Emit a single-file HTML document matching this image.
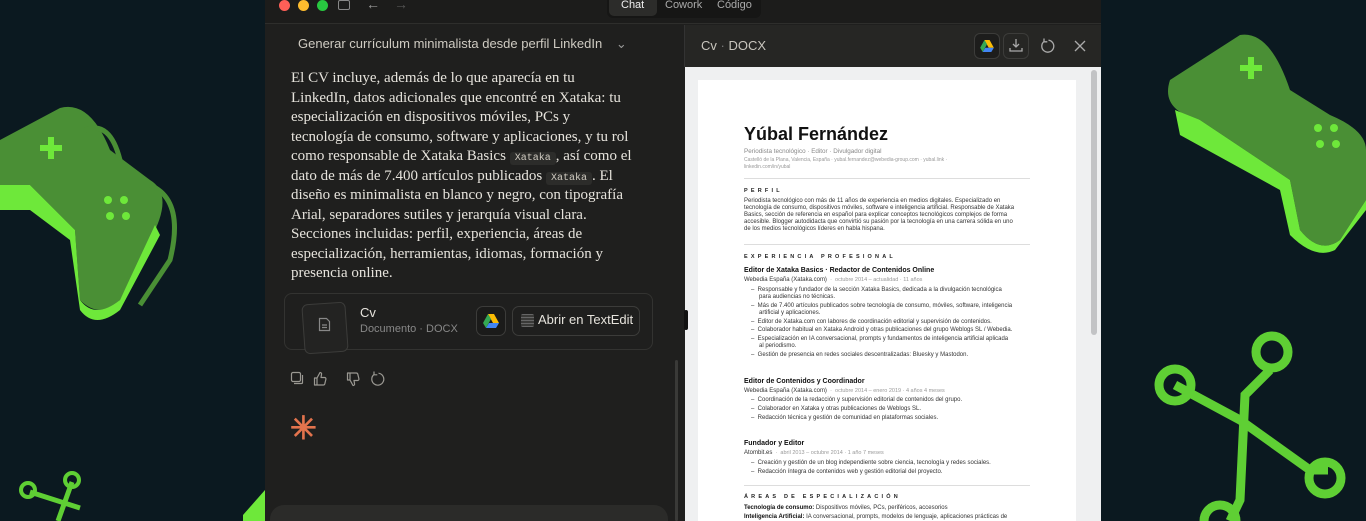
<!DOCTYPE html>
<html><head><meta charset="utf-8"><style>
*{margin:0;padding:0;box-sizing:border-box}
body{width:1366px;height:521px;overflow:hidden;background:#0b1920;font-family:"Liberation Sans",sans-serif;position:relative}
.a{position:absolute}
.win{left:265px;top:0;width:836px;height:521px;background:#1f1f1e;overflow:hidden}
.tb{left:0;top:0;width:836px;height:24px;background:#1c1c1b;border-bottom:1px solid #2e2e2c}
.chat p{position:absolute;left:26px;font-family:"Liberation Serif",serif;font-size:15px;color:#e6e3dc;white-space:nowrap}
.code{font-family:"Liberation Mono",monospace;font-size:10px;background:#2c2c2a;color:#cfcac0;padding:1px 5px;border-radius:3px}
.doc div{position:absolute;white-space:nowrap;font-family:"Liberation Sans",sans-serif}
.h{font-size:7.5px;font-weight:bold;color:#222;letter-spacing:3.2px}
.t{font-size:6px;color:#333}
.j{font-size:7px;font-weight:bold;color:#111}
.g{font-size:5.5px;color:#999}
.hr{height:1px;background:#ddd;width:286px}
</style></head><body>
<svg class="a" style="left:0;top:0" width="1366" height="521">
<g fill="#4a8f35">
<path d="M0 140 L60 108 Q90 100 110 150 L150 180 Q175 195 150 240 L120 300 Q100 320 80 300 L75 230 L30 185 L0 200Z"/>
<path d="M1170 80 L1240 35 Q1270 30 1290 90 L1330 115 Q1366 130 1366 150 L1366 200 L1340 240 Q1320 255 1300 230 L1290 180 L1200 120 Q1160 110 1170 80Z"/>
</g>
<g fill="#6ee83a">
<path d="M0 185 L30 185 L75 230 L80 300 Q95 320 120 300 L155 225 L160 235 L120 310 Q95 330 80 310 L70 240 L30 210 L0 210Z"/>
<path d="M1175 110 L1200 120 L1290 180 L1300 230 Q1320 255 1340 240 L1366 200 L1366 210 L1335 250 Q1315 260 1290 235 L1280 190 L1180 135Z"/>
<path d="M40 145 h8 v-8 h6 v8 h8 v6 h-8 v8 h-6 v-8 h-8z"/>
<path d="M1240 65 h8 v-8 h6 v8 h8 v6 h-8 v8 h-6 v-8 h-8z"/>
<circle cx="108" cy="200" r="4"/><circle cx="124" cy="200" r="4"/><circle cx="110" cy="216" r="4"/><circle cx="126" cy="216" r="4"/>
<circle cx="1318" cy="128" r="4"/><circle cx="1334" cy="128" r="4"/><circle cx="1320" cy="144" r="4"/><circle cx="1336" cy="144" r="4"/>
</g>
<g fill="none" stroke="#4a8f35" stroke-width="5"><path d="M150 185 Q185 200 170 260 L140 305"/><path d="M85 130 Q110 120 120 160"/></g>
<g fill="none" stroke="#5fcf34" stroke-width="9"><path d="M1175 385 L1240 420 L1310 470 L1328 470"/><path d="M1270 370 L1245 395 L1240 500 L1230 521"/>
<circle cx="1175" cy="385" r="16"/><circle cx="1272" cy="352" r="16"/><circle cx="1325" cy="478" r="16"/><circle cx="1220" cy="521" r="16"/>
<path d="M30 492 L80 508 M72 482 L58 521" stroke-width="5"/><circle cx="28" cy="490" r="7" stroke-width="4"/><circle cx="72" cy="480" r="7" stroke-width="4"/></g>
<path d="M243 515 L265 490 L265 521 L243 521Z" fill="#6ee83a"/>
</svg>
<div class="a win">
 <div class="a tb"></div>
 <div class="a" style="left:14px;top:0;width:11px;height:11px;border-radius:50%;background:#fe5f57"></div>
 <div class="a" style="left:33px;top:0;width:11px;height:11px;border-radius:50%;background:#febc2e"></div>
 <div class="a" style="left:52px;top:0;width:11px;height:11px;border-radius:50%;background:#28c840"></div>
 <div class="a" style="left:73px;top:0;width:12px;height:10px;border:1.3px solid #888;border-radius:2px"></div>
 <div class="a" style="left:101px;top:-4px;color:#999;font-size:14px">←</div>
 <div class="a" style="left:129px;top:-4px;color:#555;font-size:14px">→</div>
 <div class="a" style="left:342px;top:-6px;width:154px;height:24px;background:#161615;border-radius:6px"></div>
 <div class="a" style="left:344px;top:-6px;width:48px;height:22px;background:#2c2c2a;border-radius:5px"></div>
 <div class="a" style="left:356px;top:-1px;color:#f0f0f0;font-size:11px">Chat</div>
 <div class="a" style="left:400px;top:-1px;color:#aaa;font-size:11px">Cowork</div>
 <div class="a" style="left:452px;top:-1px;color:#aaa;font-size:11px">Código</div>
 <div class="chat">
  <div class="a" style="left:33px;top:36px;color:#cfcbc2;font-size:13px">Generar currículum minimalista desde perfil LinkedIn <span style="margin-left:10px;color:#999">⌄</span></div>
  <p style="top:70px">El CV incluye, además de lo que aparecía en tu</p>
  <p style="top:89.5px">LinkedIn, datos adicionales que encontré en Xataka: tu</p>
  <p style="top:109px">especialización en dispositivos móviles, PCs y</p>
  <p style="top:128.5px">tecnología de consumo, software y aplicaciones, y tu rol</p>
  <p style="top:148px">como responsable de Xataka Basics <span class="code">Xataka</span>, así como el</p>
  <p style="top:167.5px">dato de más de 7.400 artículos publicados <span class="code">Xataka</span>. El</p>
  <p style="top:187px">diseño es minimalista en blanco y negro, con tipografía</p>
  <p style="top:206.5px">Arial, separadores sutiles y jerarquía visual clara.</p>
  <p style="top:226px">Secciones incluidas: perfil, experiencia, áreas de</p>
  <p style="top:245.5px">especialización, herramientas, idiomas, formación y</p>
  <p style="top:265px">presencia online.</p>
 </div>
 <div class="a" style="left:19px;top:293px;width:369px;height:57px;border:1px solid #333331;border-radius:8px"></div>
 <div class="a" style="left:38px;top:303px;width:44px;height:50px;border:1px solid #3c3c3a;border-radius:6px;background:#232322;transform:rotate(-4deg)"></div>
 <svg class="a" style="left:53px;top:317px" width="13" height="15" fill="none" stroke="#888" stroke-width="1.2"><path d="M1.5 1.5h7l3 3v9h-10z M4 8h5 M4 10.5h5"/></svg>
 <div class="a" style="left:95px;top:305px;color:#e6e3dc;font-size:13px">Cv</div>
 <div class="a" style="left:95px;top:323px;color:#888;font-size:11px">Documento · DOCX</div>
 <div class="a" style="left:211px;top:306px;width:30px;height:30px;border:1px solid #3c3c3a;border-radius:7px;background:#1b1b1a"></div>
 <svg class="a" style="left:218px;top:314px" width="16" height="14" viewBox="0 0 16 14"><path d="M5 0h6l5 9h-6z" fill="#fbbc04"/><path d="M5 0L0 9l3 5 5-9z" fill="#34a853"/><path d="M3 14h10l3-5H6z" fill="#4285f4"/></svg>
 <div class="a" style="left:247px;top:306px;width:128px;height:30px;border:1px solid #3c3c3a;border-radius:7px"></div>
 <div class="a" style="left:256px;top:314px;width:13px;height:13px;background:repeating-linear-gradient(#666 0 1px,#3a3a38 1px 3px);border-radius:2px"></div>
 <div class="a" style="left:273px;top:312px;color:#e6e3dc;font-size:13px">Abrir en TextEdit</div>
 <svg class="a" style="left:25px;top:371px" width="120" height="16" fill="none" stroke="#9a9892" stroke-width="1.2" stroke-linejoin="round">
  <rect x="1.5" y="1.5" width="9" height="9" rx="1.5"/><path d="M4 12.5h7.5a1 1 0 0 0 1-1V4"/>
  <path d="M27 7v7h-2.5V7z M27 7l3-5.5c1.2 0 1.8.8 1.5 2L31 6.5h3.5c1 0 1.6.8 1.4 1.7l-1.1 4.6c-.2.7-.8 1.2-1.5 1.2H27"/>
  <path d="M60 9V2h-2.5v7z M60 9l3 5.5c1.2 0 1.8-.8 1.5-2L64 9.5h3.5c1 0 1.6-.8 1.4-1.7l-1.1-4.6c-.2-.7-.8-1.2-1.5-1.2H60"/>
  <path d="M84 3.5a6 6 0 1 0 4.5-1.3 M84 0.5v3.3h3.3"/>
 </svg>
 <div class="a" style="left:25px;top:412px;color:#e2734d;font-size:32px;line-height:32px;font-weight:bold">✳</div>
 <div class="a" style="left:5px;top:505px;width:398px;height:40px;background:#2b2b29;border-radius:14px"></div>
 <div class="a" style="left:410px;top:360px;width:3px;height:161px;background:#3a3a38;border-radius:2px"></div>
 <div class="a" style="left:419px;top:25px;width:417px;height:42px;background:#262624;border-left:1px solid #333"></div>
 <div class="a" style="left:436px;top:38px;color:#c8c5bd;font-size:13px">Cv <span style="color:#777">·</span> DOCX</div>
 <div class="a" style="left:709px;top:33px;width:26px;height:26px;border:1px solid #3c3c3a;border-radius:6px;background:#1d1d1c"></div>
 <svg class="a" style="left:715px;top:40px" width="14" height="12" viewBox="0 0 16 14"><path d="M5 0h6l5 9h-6z" fill="#fbbc04"/><path d="M5 0L0 9l3 5 5-9z" fill="#34a853"/><path d="M3 14h10l3-5H6z" fill="#4285f4"/></svg>
 <div class="a" style="left:738px;top:33px;width:26px;height:26px;border:1px solid #3c3c3a;border-radius:6px"></div>
 <svg class="a" style="left:744px;top:38px" width="14" height="14" fill="none" stroke="#aaa" stroke-width="1.3"><path d="M7 1v8M4 6l3 3 3-3M1 10v3h12v-3"/></svg>
 <svg class="a" style="left:775px;top:38px" width="16" height="16" fill="none" stroke="#aaa" stroke-width="1.3"><path d="M4 3.5a6 6 0 1 0 4.5-1.3 M4 0.5v3.3h3.3"/></svg>
 <svg class="a" style="left:809px;top:40px" width="12" height="12" stroke="#aaa" stroke-width="1.3"><path d="M1 1l10 10M11 1L1 11"/></svg>
 <div class="a" style="left:420px;top:67px;width:416px;height:454px;background:#eff0f1"></div>
 <div class="a" style="left:419px;top:310px;width:4px;height:20px;background:#111;border-radius:2px"></div>
 <div class="a" style="left:826px;top:70px;width:6px;height:265px;background:#c2c3c5;border-radius:3px"></div>
 <div class="a" style="left:433px;top:80px;width:378px;height:441px;background:#fff"></div>
</div>
<div class="doc">
 <div style="left:744px;top:124px;font-size:18px;font-weight:bold;color:#111">Yúbal Fernández</div>
 <div style="left:744px;top:148px;font-size:6.3px;color:#888">Periodista tecnológico · Editor · Divulgador digital</div>
 <div style="left:744px;top:157px;font-size:5px;color:#999">Castelló de la Plana, Valencia, España · yubal.fernandez@webedia-group.com · yubal.link ·</div>
 <div style="left:744px;top:164px;font-size:5px;color:#999">linkedin.com/in/yubal</div>
 <div class="hr" style="left:744px;top:178px"></div>
 <div class="h" style="left:744px;top:188px;font-size:5.5px">PERFIL</div>
 <div class="t" style="left:744px;top:198px">Periodista tecnológico con más de 11 años de experiencia en medios digitales. Especializado en</div>
 <div class="t" style="left:744px;top:205px">tecnología de consumo, dispositivos móviles, software e inteligencia artificial. Responsable de Xataka</div>
 <div class="t" style="left:744px;top:212px">Basics, sección de referencia en español para explicar conceptos tecnológicos complejos de forma</div>
 <div class="t" style="left:744px;top:219px">accesible. Blogger autodidacta que convirtió su pasión por la tecnología en una carrera sólida en uno</div>
 <div class="t" style="left:744px;top:226px">de los medios tecnológicos líderes en habla hispana.</div>
 <div class="hr" style="left:744px;top:244px"></div>
 <div class="h" style="left:744px;top:254px;font-size:5.5px">EXPERIENCIA PROFESIONAL</div>
 <div class="j" style="left:744px;top:267px">Editor de Xataka Basics · Redactor de Contenidos Online</div>
 <div class="t" style="left:744px;top:277px">Webedia España (Xataka.com) <span class="g">&nbsp;·&nbsp; octubre 2014 – actualidad · 11 años</span></div>
 <div class="t" style="left:751px;top:287px">–&nbsp; Responsable y fundador de la sección Xataka Basics, dedicada a la divulgación tecnológica</div>
 <div class="t" style="left:759px;top:294px">para audiencias no técnicas.</div>
 <div class="t" style="left:751px;top:303px">–&nbsp; Más de 7.400 artículos publicados sobre tecnología de consumo, móviles, software, inteligencia</div>
 <div class="t" style="left:759px;top:310px">artificial y aplicaciones.</div>
 <div class="t" style="left:751px;top:319px">–&nbsp; Editor de Xataka.com con labores de coordinación editorial y supervisión de contenidos.</div>
 <div class="t" style="left:751px;top:327px">–&nbsp; Colaborador habitual en Xataka Android y otras publicaciones del grupo Weblogs SL / Webedia.</div>
 <div class="t" style="left:751px;top:336px">–&nbsp; Especialización en IA conversacional, prompts y fundamentos de inteligencia artificial aplicada</div>
 <div class="t" style="left:759px;top:343px">al periodismo.</div>
 <div class="t" style="left:751px;top:352px">–&nbsp; Gestión de presencia en redes sociales descentralizadas: Bluesky y Mastodon.</div>
 <div class="j" style="left:744px;top:378px">Editor de Contenidos y Coordinador</div>
 <div class="t" style="left:744px;top:388px">Webedia España (Xataka.com) <span class="g">&nbsp;·&nbsp; octubre 2014 – enero 2019 · 4 años 4 meses</span></div>
 <div class="t" style="left:751px;top:397px">–&nbsp; Coordinación de la redacción y supervisión editorial de contenidos del grupo.</div>
 <div class="t" style="left:751px;top:406px">–&nbsp; Colaborador en Xataka y otras publicaciones de Weblogs SL.</div>
 <div class="t" style="left:751px;top:415px">–&nbsp; Redacción técnica y gestión de comunidad en plataformas sociales.</div>
 <div class="j" style="left:744px;top:440px">Fundador y Editor</div>
 <div class="t" style="left:744px;top:450px">Atombit.es <span class="g">&nbsp;·&nbsp; abril 2013 – octubre 2014 · 1 año 7 meses</span></div>
 <div class="t" style="left:751px;top:460px">–&nbsp; Creación y gestión de un blog independiente sobre ciencia, tecnología y redes sociales.</div>
 <div class="t" style="left:751px;top:469px">–&nbsp; Redacción íntegra de contenidos web y gestión editorial del proyecto.</div>
 <div class="hr" style="left:744px;top:485px"></div>
 <div class="h" style="left:744px;top:494px;font-size:5.5px">ÁREAS DE ESPECIALIZACIÓN</div>
 <div class="t" style="left:744px;top:505px"><b style="color:#111">Tecnología de consumo:</b> Dispositivos móviles, PCs, periféricos, accesorios</div>
 <div class="t" style="left:744px;top:514px"><b style="color:#111">Inteligencia Artificial:</b> IA conversacional, prompts, modelos de lenguaje, aplicaciones prácticas de</div>
</div>
</body></html>
